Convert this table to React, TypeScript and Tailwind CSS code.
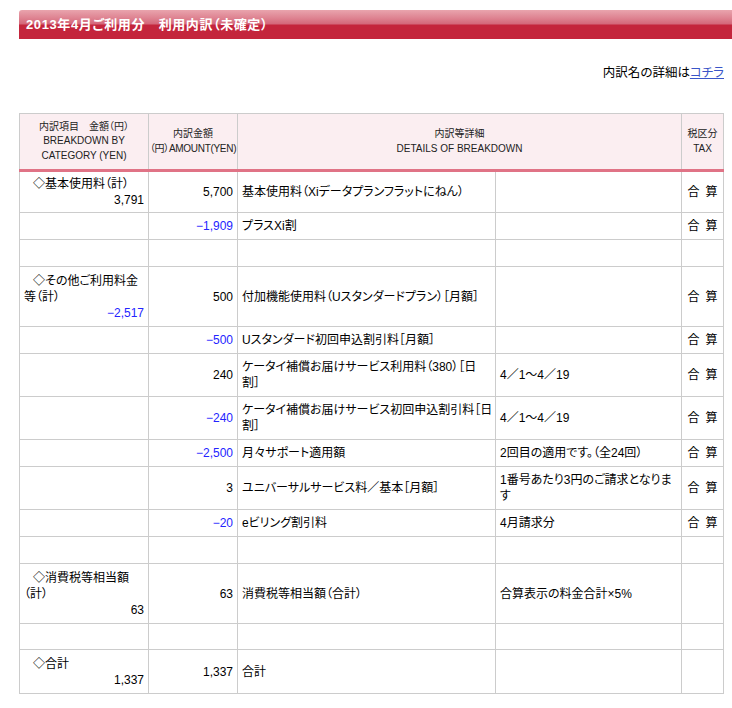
import React from "react";

const NEG = "text-[#2424ff]";

type Row = {
  h: number;
  c1?: React.ReactNode;
  n1?: string;
  n1neg?: boolean;
  amt?: string;
  neg?: boolean;
  d1?: React.ReactNode;
  d2?: React.ReactNode;
  tax?: boolean;
};

const rows: Row[] = [
  { h: 42, c1: "◇基本使用料（計）", n1: "3,791", amt: "5,700", d1: "基本使用料（Xiデータプランフラットにねん）", tax: true },
  { h: 27, amt: "−1,909", neg: true, d1: "プラスXi割", tax: true },
  { h: 27 },
  {
    h: 60,
    c1: (
      <>
        ◇その他ご利用料金
        <br />
        等（計）
      </>
    ),
    n1: "−2,517",
    n1neg: true,
    amt: "500",
    d1: "付加機能使用料（Uスタンダードプラン）［月額］",
    tax: true,
  },
  { h: 27, amt: "−500", neg: true, d1: "Uスタンダード初回申込割引料［月額］", tax: true },
  {
    h: 43,
    amt: "240",
    d1: (
      <>
        ケータイ補償お届けサービス利用料（380）［日
        <br />
        割］
      </>
    ),
    d2: "4／1～4／19",
    tax: true,
  },
  {
    h: 43,
    amt: "−240",
    neg: true,
    d1: (
      <>
        ケータイ補償お届けサービス初回申込割引料［日
        <br />
        割］
      </>
    ),
    d2: "4／1～4／19",
    tax: true,
  },
  { h: 27, amt: "−2,500", neg: true, d1: "月々サポート適用額", d2: "2回目の適用です。（全24回）", tax: true },
  {
    h: 43,
    amt: "3",
    d1: "ユニバーサルサービス料／基本［月額］",
    d2: (
      <>
        1番号あたり3円のご請求となりま
        <br />す
      </>
    ),
    tax: true,
  },
  { h: 27, amt: "−20", neg: true, d1: "eビリング割引料", d2: "4月請求分", tax: true },
  { h: 27 },
  {
    h: 60,
    c1: (
      <>
        ◇消費税等相当額
        <br />
        （計）
      </>
    ),
    n1: "63",
    amt: "63",
    d1: "消費税等相当額（合計）",
    d2: "合算表示の料金合計×5%",
  },
  { h: 26 },
  { h: 44, c1: "◇合計", n1: "1,337", amt: "1,337", d1: "合計" },
];

const td = "border border-[#cccccc] px-[4px] py-0 align-middle whitespace-nowrap";
const th =
  "border border-b-[3px] border-[#cccccc] border-b-[#e07386] px-0 text-center font-normal whitespace-nowrap";

export default function App() {
  return (
    <div
      className="min-h-[708px] bg-white pt-[10px] pl-[19px] text-black [font-feature-settings:'palt']"
      style={{ fontFamily: '"Liberation Sans", "Noto Sans CJK JP", sans-serif' }}
    >
      <div className="h-[29px] rounded-tl-[3px] bg-[linear-gradient(to_bottom,#e9a4ad_0px,#de8391_8px,#d4677a_14px,#c4253c_15px,#c4253c_100%)] pl-[7px] text-[13px] font-bold leading-[29px] tracking-[0.6px] text-white">
        2013年4月ご利用分　利用内訳（未確定）
      </div>

      <div className="mt-[25px] pr-[8px] text-right text-[12.5px] leading-[18px]">
        内訳名の詳細は
        <a href="#" className="text-[#3a55c8] underline">
          コチラ
        </a>
      </div>

      <table className="mt-[31px] w-[704px] table-fixed border-collapse text-[12px] leading-[16px]">
        <colgroup>
          <col className="w-[129px]" />
          <col className="w-[89px]" />
          <col className="w-[258px]" />
          <col className="w-[186px]" />
          <col className="w-[42px]" />
        </colgroup>
        <thead>
          <tr className="h-[57px] bg-[#fbeef1] text-[10px] leading-[14.5px] text-[#222]">
            <th className={th}>
              内訳項目　金額（円）
              <br />
              BREAKDOWN BY
              <br />
              CATEGORY (YEN)
            </th>
            <th className={th}>
              内訳金額
              <br />
              <span className="tracking-[-0.3px]">（円）AMOUNT(YEN)</span>
            </th>
            <th colSpan={2} className={th}>
              内訳等詳細
              <br />
              DETAILS OF BREAKDOWN
            </th>
            <th className={th}>
              税区分
              <br />
              TAX
            </th>
          </tr>
        </thead>
        <tbody>
          {rows.map((r, i) => (
            <tr key={i} style={{ height: r.h }}>
              <td className={td}>
                {r.c1 && <div className="indent-[9px]">{r.c1}</div>}
                {r.n1 && <div className={`text-right ${r.n1neg ? NEG : ""}`}>{r.n1}</div>}
              </td>
              <td className={`${td} text-right ${r.neg ? NEG : ""}`}>{r.amt}</td>
              <td className={td}>{r.d1}</td>
              <td className={td}>{r.d2}</td>
              <td className={`${td} text-center`}>
                {r.tax && (
                  <span>
                    合<span className="ml-[6px]">算</span>
                  </span>
                )}
              </td>
            </tr>
          ))}
        </tbody>
      </table>
    </div>
  );
}
